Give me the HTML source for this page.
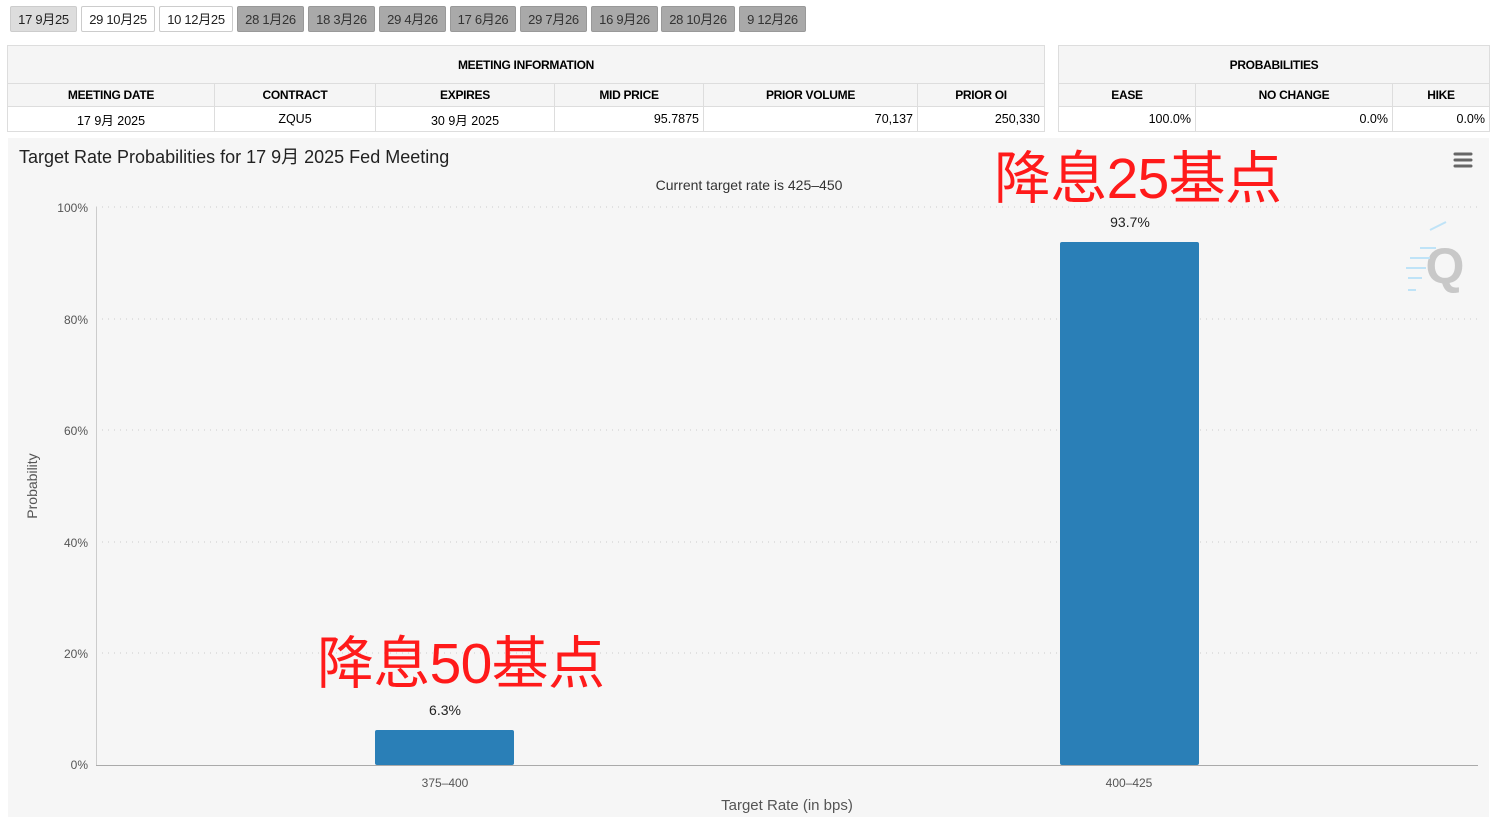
<!DOCTYPE html><html><head><meta charset="utf-8"><style>
body{margin:0;width:1493px;height:817px;background:#fff;font-family:"Liberation Sans","Noto Sans CJK SC",sans-serif;position:relative;overflow:hidden}
.b{position:absolute;top:6px;height:26px;line-height:26px;font-size:13px;text-align:center;border:1px solid #ccc;box-sizing:border-box;border-radius:2px;color:#222;letter-spacing:-0.3px}
.g{background:#a9a9a9;border-color:#999;color:#333}
table{position:absolute;border-collapse:collapse;font-size:12px;top:45px}
td{border:1px solid #ddd;height:22px;padding:0 4px;text-align:center}
.h td{background:#f5f5f5;font-weight:bold;letter-spacing:-0.3px}
.d td{height:24px;font-size:12.5px}
.n{text-align:right}
.a{position:absolute}
</style></head><body>
<div class="b" style="left:10px;width:67px;background:#ddd">17 9月25</div>
<div class="b" style="left:81px;width:74px">29 10月25</div>
<div class="b" style="left:159px;width:74px">10 12月25</div>
<div class="b g" style="left:237px;width:67px">28 1月26</div>
<div class="b g" style="left:308px;width:67px">18 3月26</div>
<div class="b g" style="left:379px;width:67px">29 4月26</div>
<div class="b g" style="left:450px;width:66px">17 6月26</div>
<div class="b g" style="left:520px;width:67px">29 7月26</div>
<div class="b g" style="left:591px;width:67px">16 9月26</div>
<div class="b g" style="left:661px;width:74px">28 10月26</div>
<div class="b g" style="left:739px;width:67px">9 12月26</div>
<table style="left:7px;width:1038px">
<tr class="h"><td colspan="6" style="height:37px">MEETING INFORMATION</td></tr>
<tr class="h"><td style="width:198px">MEETING DATE</td><td style="width:152px">CONTRACT</td><td style="width:170px">EXPIRES</td><td style="width:140px">MID PRICE</td><td style="width:205px">PRIOR VOLUME</td><td>PRIOR OI</td></tr>
<tr class="d"><td>17 9月 2025</td><td>ZQU5</td><td>30 9月 2025</td><td class="n">95.7875</td><td class="n">70,137</td><td class="n">250,330</td></tr></table>
<table style="left:1058px;width:432px">
<tr class="h"><td colspan="3" style="height:37px">PROBABILITIES</td></tr>
<tr class="h"><td style="width:128px">EASE</td><td style="width:188px">NO CHANGE</td><td>HIKE</td></tr>
<tr class="d"><td class="n">100.0%</td><td class="n">0.0%</td><td class="n">0.0%</td></tr></table>
<div class="a" style="left:8px;top:138px;width:1481px;height:679px;background:#f6f6f6"></div>
<svg class="a" style="left:0;top:0" width="1493" height="817" font-family="Liberation Sans,DejaVu Sans,sans-serif">
<text x="19" y="163" font-size="18" fill="#222">Target Rate Probabilities for 17 9月 2025 Fed Meeting</text>
<text x="749" y="190" font-size="14" fill="#333" text-anchor="middle">Current target rate is 425–450</text>
<g stroke="#ccc" stroke-dasharray="1,5"><line x1="96" x2="1478" y1="207" y2="207"/><line x1="96" x2="1478" y1="319" y2="319"/><line x1="96" x2="1478" y1="430" y2="430"/><line x1="96" x2="1478" y1="542" y2="542"/><line x1="96" x2="1478" y1="653" y2="653"/></g>
<line x1="96.5" x2="96.5" y1="207" y2="765" stroke="#ccc"/>
<line x1="96" x2="1478" y1="765.5" y2="765.5" stroke="#aaa"/>
<g font-size="12" fill="#555" text-anchor="end"><text x="88" y="212">100%</text><text x="88" y="324">80%</text><text x="88" y="435">60%</text><text x="88" y="547">40%</text><text x="88" y="658">20%</text><text x="88" y="769">0%</text></g>
<text transform="translate(37,486) rotate(-90)" font-size="14" fill="#555" text-anchor="middle">Probability</text>
<rect x="375" y="730" width="139" height="35" fill="#2a7fb7" rx="2"/>
<rect x="1060" y="242" width="139" height="523" fill="#2a7fb7" rx="2"/>
<text x="445" y="715" font-size="14" fill="#222" text-anchor="middle">6.3%</text>
<text x="1130" y="227" font-size="14" fill="#222" text-anchor="middle">93.7%</text>
<text x="445" y="787" font-size="12" fill="#555" text-anchor="middle">375–400</text>
<text x="1129" y="787" font-size="12" fill="#555" text-anchor="middle">400–425</text>
<text x="787" y="810" font-size="15" fill="#555" text-anchor="middle">Target Rate (in bps)</text>
<g stroke="#666" stroke-width="3" stroke-linecap="round"><line x1="1455" x2="1471" y1="154" y2="154"/><line x1="1455" x2="1471" y1="160" y2="160"/><line x1="1455" x2="1471" y1="166" y2="166"/></g>
<text x="1445" y="283" font-size="50" font-weight="bold" fill="#c8c8c8" text-anchor="middle">Q</text>
<g stroke="#bfe3f7" stroke-width="2"><line x1="1430" y1="230" x2="1446" y2="222"/><line x1="1420" y1="248" x2="1436" y2="248"/><line x1="1410" y1="258" x2="1430" y2="258"/><line x1="1406" y1="268" x2="1426" y2="268"/><line x1="1408" y1="278" x2="1422" y2="278"/><line x1="1408" y1="290" x2="1416" y2="290"/></g>
<text x="994" y="198" font-size="57" fill="#ff1a1a" font-family="Liberation Sans,Noto Sans CJK SC,sans-serif" textLength="288">降息25基点</text>
<text x="317" y="683" font-size="57" fill="#ff1a1a" font-family="Liberation Sans,Noto Sans CJK SC,sans-serif" textLength="288">降息50基点</text>
</svg>
</body></html>
